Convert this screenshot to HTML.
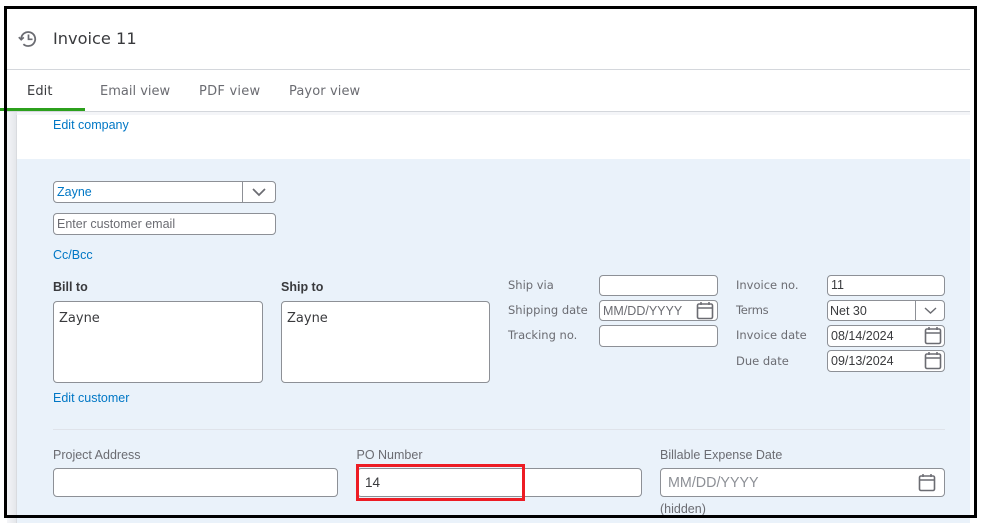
<!DOCTYPE html>
<html>
<head>
<meta charset="utf-8">
<style>
html,body{margin:0;padding:0;background:#fff}
#p{position:relative;width:983px;height:523px;overflow:hidden;background:#fff;font-family:"Liberation Sans",sans-serif;color:#393a3d}
#p div,#p span.t{position:absolute;box-sizing:border-box;white-space:nowrap}
.t{line-height:16px}
.in{background:#fff;border:1px solid #8d9096;border-radius:4px}
.lnk{color:#0077c5;font-size:12.5px}
.av{font-family:"DejaVu Sans",sans-serif;font-size:11.5px;color:#6b6c72}
.tab{font-family:"DejaVu Sans",sans-serif;font-size:13px;color:#6b6c72;letter-spacing:.1px}
svg{position:absolute}
</style>
</head>
<body>
<div id="p">
  <!-- page backgrounds -->
  <div style="left:7px;top:112px;width:963px;height:3px;background:#f4f5f8"></div>
  <div style="left:7px;top:112px;width:10px;height:411px;background:linear-gradient(90deg,#f4f5f8,#e3e5e9)"></div>
  <div style="left:16px;top:115px;width:1px;height:408px;background:#d9dbdf"></div>
  <div style="left:17px;top:115px;width:953px;height:44px;background:#fff"></div>
  <div style="left:17px;top:159px;width:953px;height:364px;background:#eaf2fa"></div>

  <!-- header -->
  <div style="left:7px;top:69px;width:963px;height:1px;background:#d4d7dc"></div>
  <div style="left:7px;top:111px;width:963px;height:1px;background:#d4d7dc"></div>
  <div style="left:0;top:108px;width:85px;height:3px;background:#2ca01c"></div>

  <svg style="left:18px;top:29px" width="20" height="20" viewBox="0 0 20 20" fill="none" stroke="#6b6c72" stroke-width="1.8"><path d="M3.2 10a7 7 0 1 1 2.2 5.1"/><path d="M0.8 8.2l2.4 2.6 2.6-2.4" stroke-width="1.6"/><path d="M10.5 5.5v4.8h4" stroke-width="1.7"/></svg>
  <span class="t" style="position:absolute;left:53px;top:29px;line-height:20px;font-family:'DejaVu Sans',sans-serif;font-size:16.2px;color:#393a3d">Invoice 11</span>

  <span class="t tab" style="position:absolute;left:27px;top:84px;color:#393a3d">Edit</span>
  <span class="t tab" style="position:absolute;left:100px;top:84px;letter-spacing:0">Email view</span>
  <span class="t tab" style="position:absolute;left:199px;top:84px;letter-spacing:.25px">PDF view</span>
  <span class="t tab" style="position:absolute;left:289px;top:84px">Payor view</span>

  <span class="t lnk" style="position:absolute;left:53px;top:117px">Edit company</span>

  <!-- customer -->
  <div class="in" style="left:53px;top:181px;width:223px;height:22px"></div>
  <div style="left:242px;top:182px;width:1px;height:20px;background:#8d9096"></div>
  <svg style="left:251px;top:187px" width="16" height="10" viewBox="0 0 16 10" fill="none" stroke="#6b6c72" stroke-width="1.7"><path d="M2 2l6 6 6-6"/></svg>
  <span class="t" style="position:absolute;left:57px;top:184px;font-size:12.5px;color:#0077c5">Zayne</span>
  <div class="in" style="left:53px;top:213px;width:223px;height:22px"></div>
  <span class="t" style="position:absolute;left:57px;top:216px;font-size:12.5px;color:#6b6c72">Enter customer email</span>
  <span class="t lnk" style="position:absolute;left:53px;top:247px">Cc/Bcc</span>

  <!-- addresses -->
  <span class="t" style="position:absolute;left:53px;top:279px;font-size:12.5px;font-weight:bold;color:#393a3d">Bill to</span>
  <span class="t" style="position:absolute;left:281px;top:279px;font-size:12.5px;font-weight:bold;color:#393a3d">Ship to</span>
  <div class="in" style="left:53px;top:301px;width:210px;height:82px"></div>
  <div class="in" style="left:281px;top:301px;width:209px;height:82px"></div>
  <span class="t" style="position:absolute;left:59px;top:311px;font-family:'DejaVu Sans',sans-serif;font-size:13px;color:#393a3d">Zayne</span>
  <span class="t" style="position:absolute;left:287px;top:311px;font-family:'DejaVu Sans',sans-serif;font-size:13px;color:#393a3d">Zayne</span>
  <span class="t lnk" style="position:absolute;left:53px;top:390px">Edit customer</span>

  <!-- shipping -->
  <span class="t av" style="position:absolute;left:508px;top:277px">Ship via</span>
  <span class="t av" style="position:absolute;left:508px;top:302px">Shipping date</span>
  <span class="t av" style="position:absolute;left:508px;top:327px">Tracking no.</span>
  <div class="in" style="left:599px;top:275px;width:119px;height:21px"></div>
  <div class="in" style="left:599px;top:300px;width:119px;height:21px"></div>
  <div class="in" style="left:599px;top:325px;width:119px;height:22px"></div>
  <span class="t" style="position:absolute;left:603px;top:303px;font-size:12.5px;color:#6b6c72">MM/DD/YYYY</span>
  <svg style="left:696px;top:301px" width="18" height="19" viewBox="0 0 18 19" fill="none" stroke="#6b6c72"><rect x="1.5" y="3" width="15" height="14.5" rx="1.5" stroke-width="1.6"/><path d="M1.5 7h15" stroke-width="1.5"/><path d="M5 1v3M13 1v3" stroke-width="1.5"/></svg>

  <!-- invoice -->
  <span class="t av" style="position:absolute;left:736px;top:277px">Invoice no.</span>
  <span class="t av" style="position:absolute;left:736px;top:302px;letter-spacing:-.3px">Terms</span>
  <span class="t av" style="position:absolute;left:736px;top:327px">Invoice date</span>
  <span class="t av" style="position:absolute;left:736px;top:353px">Due date</span>
  <div class="in" style="left:827px;top:275px;width:118px;height:21px"></div>
  <div class="in" style="left:827px;top:300px;width:118px;height:21px"></div>
  <div style="left:915px;top:301px;width:1px;height:19px;background:#8d9096"></div>
  <svg style="left:923px;top:306px" width="15" height="9" viewBox="0 0 15 9" fill="none" stroke="#6b6c72" stroke-width="1.4"><path d="M2 2l5.5 5L13 2"/></svg>
  <div class="in" style="left:827px;top:325px;width:118px;height:22px"></div>
  <div class="in" style="left:827px;top:350px;width:118px;height:22px"></div>
  <span class="t" style="position:absolute;left:831px;top:277px;font-size:12.5px;color:#393a3d">11</span>
  <span class="t" style="position:absolute;left:830px;top:303px;font-size:12.5px;color:#393a3d">Net 30</span>
  <span class="t" style="position:absolute;left:831px;top:328px;font-size:12.5px;color:#393a3d">08/14/2024</span>
  <span class="t" style="position:absolute;left:831px;top:353px;font-size:12.5px;color:#393a3d">09/13/2024</span>
  <svg style="left:924px;top:326px" width="18" height="19" viewBox="0 0 18 19" fill="none" stroke="#6b6c72"><rect x="1.5" y="3" width="15" height="14.5" rx="1.5" stroke-width="1.6"/><path d="M1.5 7h15" stroke-width="1.5"/><path d="M5 1v3M13 1v3" stroke-width="1.5"/></svg>
  <svg style="left:924px;top:351px" width="18" height="19" viewBox="0 0 18 19" fill="none" stroke="#6b6c72"><rect x="1.5" y="3" width="15" height="14.5" rx="1.5" stroke-width="1.6"/><path d="M1.5 7h15" stroke-width="1.5"/><path d="M5 1v3M13 1v3" stroke-width="1.5"/></svg>

  <!-- custom fields -->
  <div style="left:53px;top:429px;width:892px;height:1px;background:#dfe3ea"></div>
  <span class="t" style="position:absolute;left:53px;top:447px;font-size:12.5px;color:#6b6c72">Project Address</span>
  <span class="t" style="position:absolute;left:356.5px;top:447px;font-size:12.5px;color:#6b6c72">PO Number</span>
  <span class="t" style="position:absolute;left:660px;top:447px;font-size:12.5px;color:#6b6c72">Billable Expense Date</span>
  <div class="in" style="left:53px;top:468px;width:285px;height:29px"></div>
  <div class="in" style="left:357px;top:468px;width:285px;height:29px"></div>
  <div class="in" style="left:660px;top:468px;width:285px;height:29px"></div>
  <span class="t" style="position:absolute;left:365px;top:475px;font-size:13.5px;color:#393a3d">14</span>
  <span class="t" style="position:absolute;left:668px;top:475px;font-size:14.3px;color:#8d9096">MM/DD/YYYY</span>
  <svg style="left:918px;top:473px" width="18" height="19" viewBox="0 0 18 19" fill="none" stroke="#6b6c72"><rect x="1.5" y="3" width="15" height="14.5" rx="1.5" stroke-width="1.6"/><path d="M1.5 7h15" stroke-width="1.5"/><path d="M5 1v3M13 1v3" stroke-width="1.5"/></svg>
  <span class="t" style="position:absolute;left:660px;top:501px;font-size:12.5px;color:#6b6c72">(hidden)</span>

  <!-- annotations -->
  <div style="left:356px;top:464px;width:169px;height:37px;border:3px solid #ed1c24"></div>
  <div style="left:4px;top:6px;width:973px;height:512px;border:3px solid #000"></div>
</div>
</body>
</html>
